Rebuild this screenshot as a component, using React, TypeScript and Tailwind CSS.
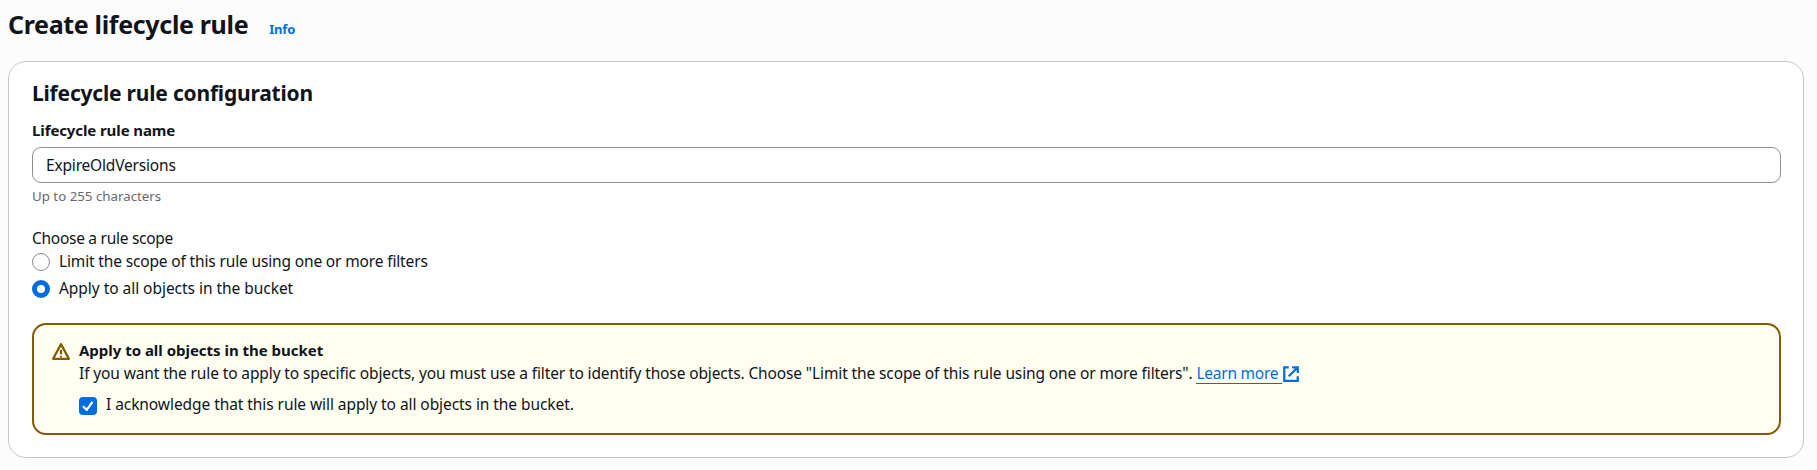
import { ReactNode, useState } from "react";

function WarningIcon() {
  return (
    <svg viewBox="0 0 16 16" className="mt-[4px] h-[18px] w-[18px] shrink-0" fill="none" stroke="#855900" strokeWidth="2" strokeLinejoin="round">
      <path d="m8 1 7 13H1L8 1Z" />
      <path d="M7.99 12H8v.01h-.01V12ZM8 6v4" />
    </svg>
  );
}

function ExternalIcon() {
  return (
    <svg viewBox="0 0 16 16" className="mt-[3px] h-[18px] w-[18px] shrink-0" fill="none" stroke="#006ce0" strokeWidth="2">
      <path d="M9 2h5v5M6 10l8-8" />
      <path d="M14 10v4H2V2h4" />
    </svg>
  );
}

function Radio({ checked, onSelect, children }: { checked: boolean; onSelect: () => void; children: ReactNode }) {
  return (
    <label className="flex h-[22px] items-start gap-[9px]">
      <input type="radio" name="scope" className="sr-only" checked={checked} onChange={onSelect} />
      <span
        className={
          checked
            ? "mt-[3px] flex h-[18px] w-[18px] shrink-0 items-center justify-center rounded-full bg-[#006ce0]"
            : "mt-[3px] flex h-[18px] w-[18px] shrink-0 rounded-full border border-[#8c8c94] bg-white"
        }
      >
        {checked && <span className="h-[8px] w-[8px] rounded-full bg-white" />}
      </span>
      {children}
    </label>
  );
}

export default function App() {
  const [scope, setScope] = useState("all");
  return (
    <main className="h-[470px] overflow-hidden bg-[#fcfcfd] pt-[6px] pr-[13px] pl-[8px] font-['Noto_Sans',sans-serif] text-[15.5px] leading-[22px] whitespace-nowrap text-[#0f141a]">
      <header className="flex h-[36px] items-baseline gap-[21px]">
        <h1 className="text-[25px] leading-[36px] font-bold tracking-[-0.33px]">Create lifecycle rule</h1>
        <a className="text-[13px] font-bold tracking-[-0.2px] text-[#006ce0]">Info</a>
      </header>
      <section className="mt-[19px] h-[397px] rounded-[18px] border border-[#c6c6cd] bg-white pt-[17px] pr-[22px] pl-[23px]">
        <h2 className="text-[21px] leading-[28px] font-bold tracking-[-0.2px]">Lifecycle rule configuration</h2>
        <p className="mt-[12px] text-[15px] font-bold tracking-[-0.1px]">Lifecycle rule name</p>
        <div className="mt-[6px] flex h-[36px] items-center rounded-[9px] border border-[#8c8c94] px-[13px]">
          <span className="tracking-[-0.18px]">ExpireOldVersions</span>
        </div>
        <p className="mt-[4px] text-[13.3px] leading-[18px] text-[#656871]">Up to 255 characters</p>
        <p className="mt-[22px] tracking-[-0.28px]">Choose a rule scope</p>
        <div className="mt-px flex flex-col gap-[5px]">
          <Radio checked={scope === "filter"} onSelect={() => setScope("filter")}>
            <span className="tracking-[-0.15px]">Limit the scope of this rule using one or more filters</span>
          </Radio>
          <Radio checked={scope === "all"} onSelect={() => setScope("all")}>
            <span className="tracking-[-0.04px]">Apply to all objects in the bucket</span>
          </Radio>
        </div>
        <div className="mt-[24px] flex h-[112px] gap-[9px] rounded-[14px] border-2 border-[#855900] bg-[#fffef0] px-[18px] pt-[14px]">
          <WarningIcon />
          <div>
            <p className="text-[15px] font-bold tracking-[-0.02px]">Apply to all objects in the bucket</p>
            <p className="mt-px flex">
              <span className="tracking-[-0.122px]">
                If you want the rule to apply to specific objects, you must use a filter to identify those objects. Choose "Limit the scope of this rule using one or more filters".
              </span>
              <a className="ml-[4px] h-[22px] border-b border-[#006ce0] pr-[4px] tracking-[-0.25px] text-[#006ce0]">Learn more</a>
              <ExternalIcon />
            </p>
            <div className="mt-[9px] flex gap-[9px]">
              <span className="mt-[4px] flex h-[18px] w-[18px] items-center justify-center rounded-[4px] bg-[#006ce0]">
                <svg viewBox="0 0 14 14" className="h-[18px] w-[18px]" fill="none" stroke="#fff" strokeWidth="1.8">
                  <path d="M3 7.2 6 10l4.5-6.2" />
                </svg>
              </span>
              <span className="tracking-[-0.07px]">I acknowledge that this rule will apply to all objects in the bucket.</span>
            </div>
          </div>
        </div>
      </section>
    </main>
  );
}
